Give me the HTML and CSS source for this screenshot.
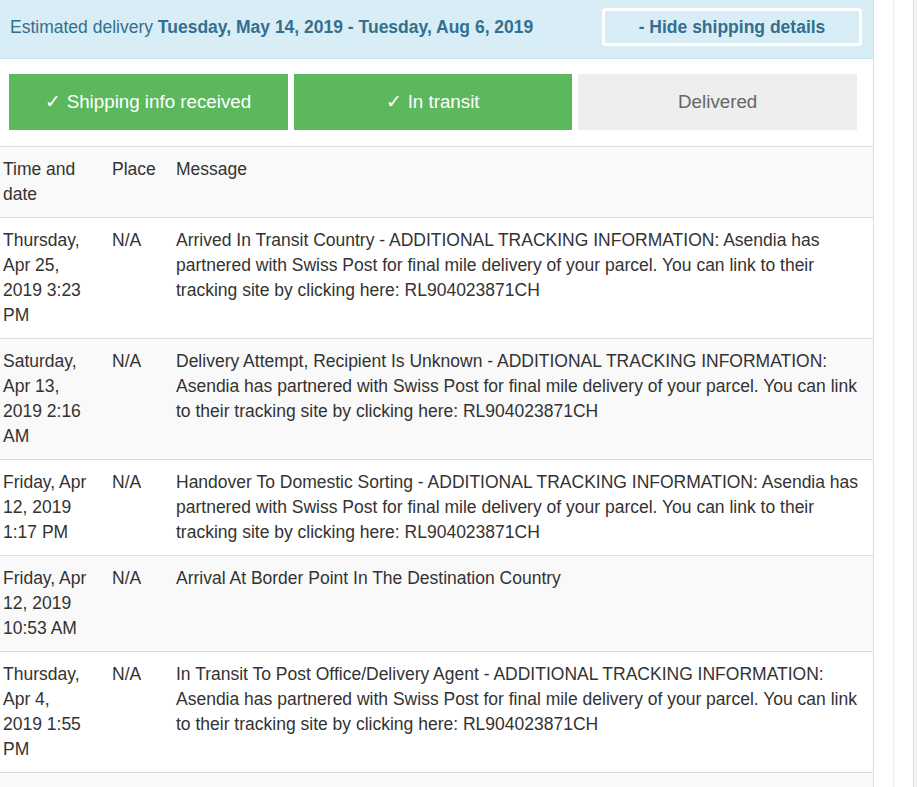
FILE: index.html
```html
<!DOCTYPE html>
<html>
<head>
<meta charset="utf-8">
<link rel="stylesheet" href="styles.css">
</head>
<body>
<div class="page">
  <main class="panel">
    <div class="estimate">
      <div class="estimate-text">Estimated delivery <strong>Tuesday, May 14, 2019 - Tuesday, Aug 6, 2019</strong></div>
      <div class="toggle">- Hide shipping details</div>
    </div>
    <div class="steps">
      <div class="step done">✓ Shipping info received</div>
      <div class="step done">✓ In transit</div>
      <div class="step">Delivered</div>
    </div>
    <table class="events">
      <colgroup>
        <col class="c-date">
        <col class="c-place">
        <col>
      </colgroup>
      <thead>
        <tr><th class="first">Time and date</th><th>Place</th><th>Message</th></tr>
      </thead>
      <tbody>
        <tr>
          <td class="first">Thursday, Apr 25, 2019 3:23 PM</td>
          <td>N/A</td>
          <td>Arrived In Transit Country - ADDITIONAL TRACKING INFORMATION: Asendia has partnered with Swiss Post for final mile delivery of your parcel. You can link to their tracking site by clicking here: RL904023871CH</td>
        </tr>
        <tr>
          <td class="first">Saturday, Apr 13, 2019 2:16 AM</td>
          <td>N/A</td>
          <td>Delivery Attempt, Recipient Is Unknown - ADDITIONAL TRACKING INFORMATION: Asendia has partnered with Swiss Post for final mile delivery of your parcel. You can link to their tracking site by clicking here: RL904023871CH</td>
        </tr>
        <tr>
          <td class="first">Friday, Apr 12, 2019 1:17 PM</td>
          <td>N/A</td>
          <td>Handover To Domestic Sorting - ADDITIONAL TRACKING INFORMATION: Asendia has partnered with Swiss Post for final mile delivery of your parcel. You can link to their tracking site by clicking here: RL904023871CH</td>
        </tr>
        <tr>
          <td class="first">Friday, Apr 12, 2019 10:53 AM</td>
          <td>N/A</td>
          <td>Arrival At Border Point In The Destination Country</td>
        </tr>
        <tr>
          <td class="first">Thursday, Apr 4, 2019 1:55 PM</td>
          <td>N/A</td>
          <td>In Transit To Post Office/Delivery Agent - ADDITIONAL TRACKING INFORMATION: Asendia has partnered with Swiss Post for final mile delivery of your parcel. You can link to their tracking site by clicking here: RL904023871CH</td>
        </tr>
        <tr class="filler">
          <td class="first">&nbsp;</td>
          <td>&nbsp;</td>
          <td>&nbsp;</td>
        </tr>
      </tbody>
    </table>
  </main>
  <aside class="side">
    <div class="side-inner"></div>
  </aside>
</div>
</body>
</html>
```

FILE: styles.css
```css
html, body {
  margin: 0;
  padding: 0;
  height: 787px;
  overflow: hidden;
  background: #fff;
}

body {
  font-family: "Liberation Sans", Arial, sans-serif;
  font-size: 17.5px;
  line-height: 25px;
  color: #333;
}

.page {
  display: flex;
  align-items: stretch;
  height: 787px;
}

.panel {
  width: 873px;
  flex: none;
  border-right: 1px solid #ddd;
  box-sizing: content-box;
}

.estimate {
  display: flex;
  align-items: center;
  justify-content: space-between;
  background: #d9edf7;
  color: #31708f;
  padding: 8px 11px 12px 10px;
  border-bottom: 1px solid #c8e1ed;
}

.estimate strong {
  font-weight: bold;
}

.toggle {
  width: 254px;
  height: 32px;
  line-height: 32px;
  border: 3px solid #fff;
  border-radius: 4px;
  background: #d9edf7;
  text-align: center;
  font-weight: bold;
  color: #31708f;
}

.steps {
  display: flex;
  gap: 6px;
  padding: 15px 16px 0 9px;
}

.step {
  flex: 1;
  height: 56px;
  line-height: 56px;
  text-align: center;
  font-size: 18.75px;
  background: #eee;
  color: #666;
}

.step.done {
  background: #5cb85c;
  color: #fff;
}

.events {
  width: 100%;
  margin-top: 16px;
  border-collapse: collapse;
  table-layout: fixed;
}

.c-date {
  width: 102px;
}

.c-place {
  width: 64px;
}

.events th,
.events td {
  text-align: left;
  vertical-align: top;
  font-weight: normal;
  padding: 10px;
  border-top: 1px solid #ddd;
}

.events .first {
  padding-left: 3px;
}

.events thead tr {
  background: #f9f9f9;
}

.events tbody tr:nth-child(even) {
  background: #f9f9f9;
}

.side {
  margin-left: 19px;
  width: 19px;
  flex: none;
  border-left: 1px solid #ececec;
  border-right: 1px solid #ddd;
}

.side-inner {
  height: 100%;
}

.page::after {
  content: "";
  flex: 1;
  background: #f3f3f3;
}
```
